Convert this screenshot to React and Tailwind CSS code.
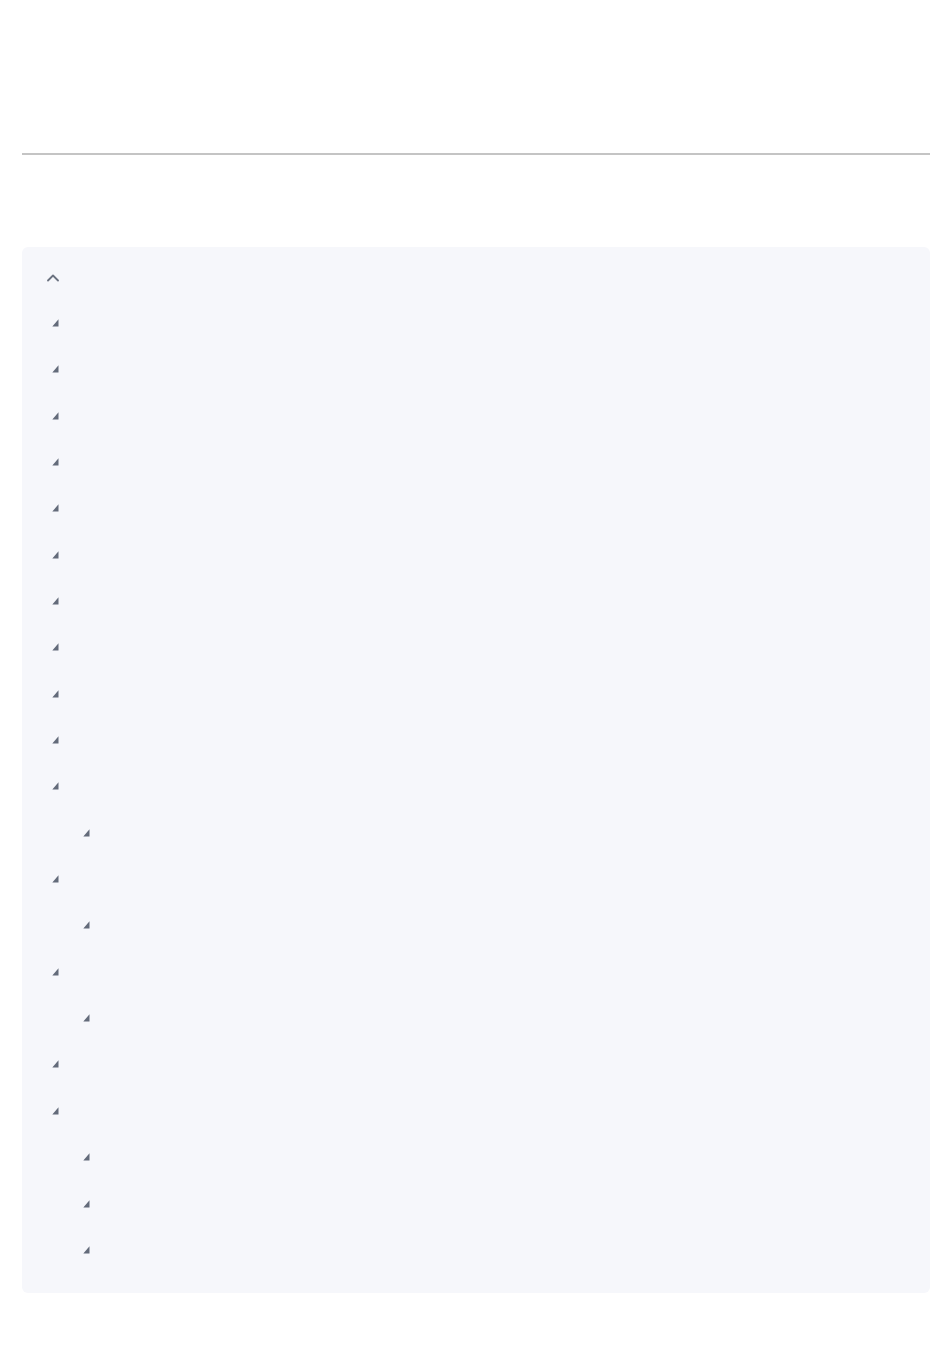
import React from "react";

const rows = [
  0, 0, 0, 0, 0, 0, 0, 0, 0, 0, 0, 1, 0, 1, 0, 1, 0, 0, 1, 1, 1,
];

const Corner = () => (
  <svg width="7" height="8" viewBox="0 0 7 8" className="block">
    <polygon points="6.5,0.3 6.5,7.6 0.3,7.6" fill="#636b7a" />
  </svg>
);

const App = () => {
  return (
    <div className="min-h-[1352px] bg-white pl-[22px] pr-[20px] pt-[60px]" style={{ fontFamily: "'Liberation Sans', Arial, sans-serif" }}>
      <h1 className="text-[60px] leading-[64px] text-white">Olam</h1>
      <hr className="mt-[29px] border-t-2 border-[#c4c4c4]" />

      <div className="mt-[92px] rounded-md bg-[#f6f7fb] pt-[21px] pb-[20px]">
        <div className="flex h-[20px] items-center pl-[25px] mb-[11.8px]">
          <svg width="12" height="8" viewBox="0 0 12 8" fill="none">
            <path d="M1 6.5 L6 1.5 L11 6.5" stroke="#6b7280" strokeWidth="1.8" strokeLinecap="round" strokeLinejoin="round" />
          </svg>
        </div>
        {rows.map((level, i) => (
          <div
            key={i}
            className={`flex h-[46.35px] items-center ${level ? "pl-[61px]" : "pl-[30px]"}`}
          >
            <Corner />
          </div>
        ))}
      </div>
    </div>
  );
};

export default App;
